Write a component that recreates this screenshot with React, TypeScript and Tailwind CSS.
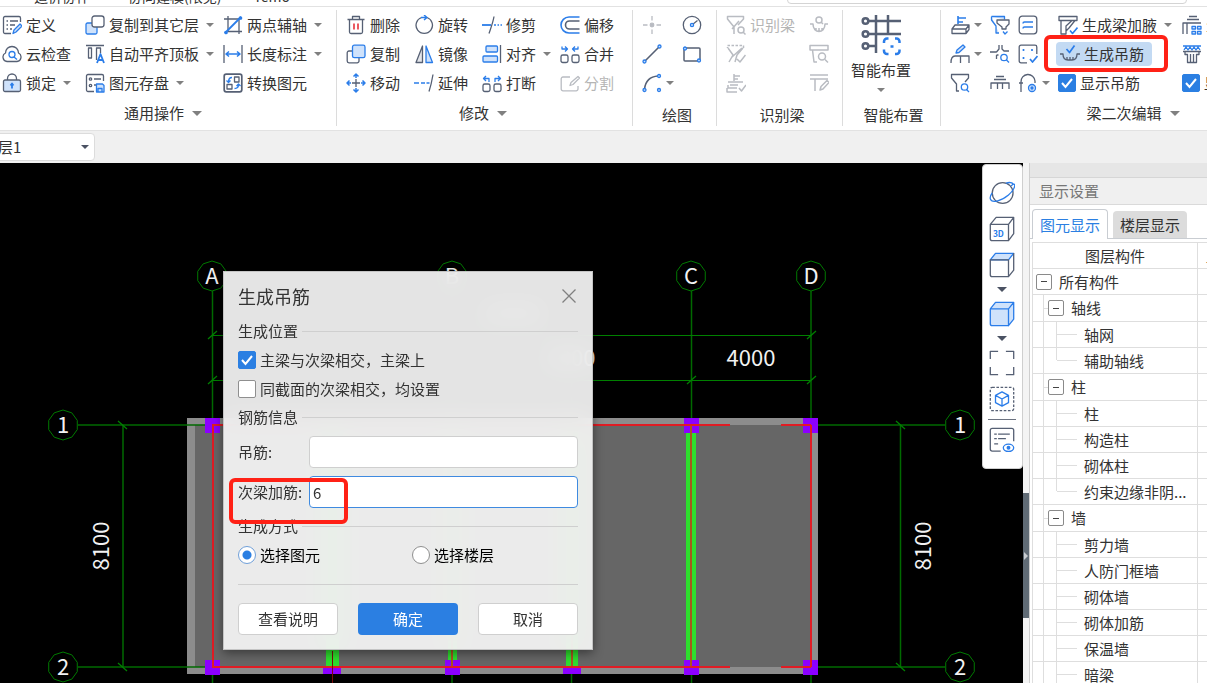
import type { ReactNode } from 'react'

const D = '#566074'
const B = '#2b7de9'
const L = '#cfe2fb'
const G = '#b9bcc2'

function Svg({ children, big }: { children: ReactNode; big?: boolean }) {
  return (
    <svg
      viewBox="0 0 20 20"
      className={big ? 'size-[26px] shrink-0' : 'size-5 shrink-0'}
      fill="none"
      stroke={D}
      strokeWidth={big ? 1 : 1.3}
      strokeLinejoin="round"
    >
      {children}
    </svg>
  )
}

const icons: Record<string, ReactNode> = {
  define: (
    <>
      <path d="M9 18.5H3A1.5 1.5 0 0 1 1.5 17V3A1.5 1.5 0 0 1 3 1.5H17A1.5 1.5 0 0 1 18.5 3V7M4.5 6h1.5M8 6h8M4.5 10h1.5M8 10h5M4.5 14h1.5M8 14h2" />
      <path d="M11 18.5l1-3.5 6-6 2 2-6 6z" stroke={B} fill={L} />
    </>
  ),
  cloud: (
    <>
      <path d="M5 17.5a4.5 4.5 0 0 1-1.5-8.5C3.5 5 6.5 2.5 10 2.5S16.5 5 16.5 9A4.5 4.5 0 0 1 15 17.5z" />
      <circle cx="10" cy="10.5" r="3" stroke={B} />
      <path d="M12 13l3 2.5" stroke={B} />
    </>
  ),
  lock: (
    <>
      <path d="M5.5 7V5.5a4.5 4.5 0 0 1 9 0V7" />
      <rect x="1.5" y="7" width="17" height="11.5" rx="1.5" fill={L} />
      <path d="M10 10.5V15.5M8.5 12.5L10 10.5l1.5 2" stroke={B} strokeWidth="1.8" />
    </>
  ),
  copyTo: (
    <>
      <rect x="1" y="8" width="11" height="11" rx="1.5" fill={L} stroke={B} />
      <rect x="7" y="1" width="12" height="11" rx="2.5" fill="#fff" />
    </>
  ),
  align: (
    <>
      <path d="M1 1.5h18M3.5 4h3v10h-3zM15.5 9V4h-4v12" />
      <path d="M12 19l3.5-9 3.5 9M13 16h5" stroke={B} strokeWidth="1.8" />
    </>
  ),
  store: (
    <>
      <path d="M9 18.5H3A1.5 1.5 0 0 1 1.5 17V3A1.5 1.5 0 0 1 3 1.5H17A1.5 1.5 0 0 1 18.5 3V8M9 6h7M9 12h3" />
      <circle cx="5.5" cy="6" r="1.2" />
      <circle cx="5.5" cy="12.5" r="1.2" />
      <path d="M11.5 11h6l1.5 1.5V19h-7.5zM13 19v-3.5h4V19" stroke={B} fill={L} />
    </>
  ),
  axis: (
    <>
      <path d="M5 1v16M16 3v16M1 4h15M5 16.5h14" />
      <path d="M2 18L18 2" stroke={B} strokeWidth="1.8" />
      <circle cx="3" cy="17.5" r="1.2" fill={B} stroke={B} />
      <circle cx="17.5" cy="3" r="1.2" fill={B} stroke={B} />
    </>
  ),
  length: (
    <>
      <path d="M1 1v18M19 1v18" />
      <path d="M3 10h14M6 7.5L3 10l3 2.5M14 7.5l3 2.5-3 2.5" stroke={B} strokeWidth="1.6" />
    </>
  ),
  convert: (
    <>
      <rect x="1.2" y="1.2" width="17.6" height="17.6" rx="2" strokeWidth="1.7" />
      <path d="M11.5 4h4.5v5h-4.5zM4 11.5h5V16H4z" />
      <path d="M9 4.5C6.5 4.5 5.5 6 5.5 9M3.5 7.5l2 2 2-2M11.5 15.5c3 0 4-1 4-4M13.5 13l2-2 2 2" stroke={B} />
    </>
  ),
  trash: (
    <>
      <path d="M1.5 4.5h17M6.5 4V1.5h7V4M3.5 4.5V17A1.5 1.5 0 0 0 5 18.5H15A1.5 1.5 0 0 0 16.5 17V4.5" />
      <path d="M8 8.5v6M12 8.5v6" stroke="#e5323c" strokeWidth="1.6" />
    </>
  ),
  copy: (
    <>
      <path d="M6 7H3A1.8 1.8 0 0 0 1.2 9V17A1.8 1.8 0 0 0 3 18.8H11A1.8 1.8 0 0 0 13 17V14" />
      <rect x="6.5" y="1.2" width="12.5" height="12.5" rx="1.8" fill={L} stroke={B} />
    </>
  ),
  move: (
    <>
      <path d="M10 6v8M6 10h8" />
      <path
        d="M10 1v4M10 15v4M1 10h4M15 10h4M7.5 3.5L10 1l2.5 2.5M7.5 16.5L10 19l2.5-2.5M3.5 7.5L1 10l2.5 2.5M16.5 7.5L19 10l-2.5 2.5"
        stroke={B}
        strokeWidth="1.5"
      />
    </>
  ),
  rotate: (
    <>
      <path d="M13 2.5A8.2 8.2 0 1 1 7.5 2.5" />
      <path d="M7 2.5h5M10 0l3 2.5L10 5" stroke={B} strokeWidth="1.5" />
    </>
  ),
  mirror: (
    <>
      <path d="M8.5 2v16.5H2z" fill="#e4e6ea" />
      <path d="M12 2v16.5h6.5z" stroke={B} fill={L} />
    </>
  ),
  extend: (
    <>
      <path d="M19 1.5c-1 6-2 11-4 17" />
      <path d="M0 10h5M7 10h4M12.5 10h3" stroke={B} strokeWidth="1.5" />
    </>
  ),
  trim: (
    <>
      <path d="M12 1.5c-1 6-3 11-5 17" />
      <path d="M0 10h9" stroke={B} strokeWidth="1.8" />
      <path d="M12 10h2M15.5 10h1.5M18.5 10h1.5" stroke={B} />
    </>
  ),
  alignTo: (
    <>
      <path d="M18.5 1v18" />
      <rect x="4" y="2" width="11.5" height="6" rx="1" fill={L} stroke={B} />
      <rect x="1" y="12" width="14.5" height="6" rx="1" fill={L} stroke={B} />
    </>
  ),
  breakUp: (
    <>
      <rect x="1" y="11" width="7" height="7.5" rx="1.8" />
      <rect x="12" y="11" width="7" height="7.5" rx="1.8" />
      <path d="M7 9V5.5H2M4 3L1.5 5.5 4 8M13 9V5.5h5M16 3l2.5 2.5L16 8" stroke={B} />
    </>
  ),
  offset: (
    <>
      <path d="M19.5 2H9a8 8 0 0 0 0 16H19.5" stroke={B} strokeWidth="1.6" />
      <path d="M19.5 6H9.5a4 4 0 0 0 0 8H19.5" strokeWidth="1.6" />
    </>
  ),
  merge: (
    <>
      <rect x="1" y="11" width="7" height="7.5" rx="1.8" />
      <rect x="12" y="11" width="7" height="7.5" rx="1.8" />
      <path d="M2 2.5V5h5M5 2.5L7.5 5 5 7.5M18 2.5V5h-5M15 2.5L12.5 5 15 7.5" stroke={B} />
    </>
  ),
  split: (
    <>
      <path d="M10 4H3A1.8 1.8 0 0 0 1.2 6V16A1.8 1.8 0 0 0 3 17.8H16A1.8 1.8 0 0 0 18 16V13" stroke={G} />
      <path d="M10 12.5l1-3 7-6 1.5 1.5-6.5 6.5z" stroke={G} />
    </>
  ),
  point: (
    <g stroke={G}>
      <path d="M10 1v4.5M10 14.5V19M1 10h4.5M14.5 10H19" />
      <circle cx="10" cy="10" r="1.8" fill={G} />
    </g>
  ),
  circle: (
    <>
      <circle cx="10" cy="10" r="8.7" />
      <path d="M10.5 9.5l5-4" />
      <circle cx="10" cy="10" r="1.6" fill={L} stroke={B} />
    </>
  ),
  line: (
    <>
      <path d="M3 17L17 3" strokeWidth="1.6" />
      <circle cx="2.5" cy="17.5" r="1.5" fill={L} stroke={B} />
      <circle cx="17.5" cy="2.5" r="1.5" fill={L} stroke={B} />
    </>
  ),
  rect: (
    <>
      <rect x="2" y="4" width="16" height="13" rx="1" strokeWidth="1.5" />
      <circle cx="3" cy="4.5" r="1.5" fill={L} stroke={B} />
      <circle cx="17" cy="16.5" r="1.5" fill={L} stroke={B} />
    </>
  ),
  arc: (
    <>
      <path d="M2.5 16C3.5 8 8 3.5 16 3" strokeWidth="1.6" />
      <circle cx="2.5" cy="17" r="1.5" fill={L} stroke={B} />
      <circle cx="17" cy="3" r="1.5" fill={L} stroke={B} />
      <circle cx="17" cy="17" r="1.5" fill={L} stroke={B} />
    </>
  ),
  filterFind: (
    <g stroke={G} strokeWidth="1.5">
      <path d="M8 19V12L1.5 4V1.5h16V4L12 10M6 14l7-8" />
      <circle cx="15" cy="15" r="3" />
      <path d="M17 17l2.5 2.5" />
    </g>
  ),
  filterDash: (
    <g stroke={G} strokeWidth="1.5">
      <path d="M17.5 4V1.5h-16V4" strokeDasharray="2.5 1.5" />
      <path d="M2 4l5 7L3 18M9 18l2-7 6-7M6 13L16 4M11 15l3 3 5.5-7" />
    </g>
  ),
  stackCheck: (
    <g stroke={G} strokeWidth="1.5">
      <path d="M8 1v7M8 3h6M8 6h4M2 9h15M4 12h8M2 12v3h9M1 15v4h10M13 15l2.5 3 4.5-6" />
    </g>
  ),
  anchorFind: (
    <g stroke={G} strokeWidth="1.5">
      <circle cx="10" cy="5" r="3" />
      <path d="M12 7l2 2M1 9h3c0 5 3 7.5 6 7.5s6-2.5 6-7.5h3M7 13v2.5M10 13v3M13 13v2.5" />
    </g>
  ),
  beamFind: (
    <g stroke={G} strokeWidth="1.5">
      <path d="M1 1.5h18V6H1zM3.5 6l1.5 12h3" />
      <circle cx="13" cy="12.5" r="3.5" />
      <path d="M16 15.5l3 3" />
    </g>
  ),
  beamEdit: (
    <g stroke={G} strokeWidth="1.5">
      <path d="M1 2h18M1 6h18M6 6v12M11 17l1-3.5 6-6 2 2-6 6.5z" />
    </g>
  ),
  flagBeam: (
    <>
      <path d="M8 9V1M8 3h8M8 7h5" stroke={B} strokeWidth="1.6" />
      <path d="M2 14l3-4h14l-3 4zM2 14v4.5h14V14M19 10v4.5l-3 4" />
    </>
  ),
  pencilBeam: (
    <>
      <path d="M6 9l1-3 6-5 2 2-6 5.5z" stroke={B} fill={L} />
      <path d="M1 19c0-4 1-7 4-7h14v7M10.5 12v7" />
    </>
  ),
  funnelFind: (
    <>
      <path d="M9 18H6.5V11L1.5 5V1.5h17V5L15 9" />
      <circle cx="14.5" cy="14" r="3.2" stroke={B} />
      <path d="M16.5 16.5L19 19" stroke={B} />
    </>
  ),
  funnels: (
    <>
      <path d="M1.5 1.5h13v3M1.5 1.5V5L6 11v7h3" stroke={B} fill={L} />
      <path d="M7 5h12v4l-3 3v2h-4v-2L7 8z" fill="#fff" />
      <path d="M13 16.5l2 2.5 2.5-2.5" stroke={B} />
    </>
  ),
  gridFind: (
    <>
      <path d="M0 8h6.5M9 1v4L6.5 8M12 1v4l2 2h5M6.5 11v4M6.5 11h2" />
      <circle cx="14" cy="13.5" r="3.2" stroke={B} />
      <path d="M16.5 16L19 18.5" stroke={B} />
    </>
  ),
  bars: <path d="M1 16v-6h18v6M4 6.5h12M6 3.5h8M7.5 10v6M12.5 10v6" />,
  sheet: (
    <>
      <rect x="1.2" y="1.2" width="17.6" height="17.6" rx="3" />
      <path d="M5 8.5c0-1 .5-1.500 1.500-1.500H15M5 13.500c0-1 .5-1.500 1.500-1.500H15" stroke={B} strokeWidth="1.5" />
    </>
  ),
  dots: (
    <>
      <path d="M9 18.8H3A1.8 1.8 0 0 1 1.2 17V3A1.8 1.8 0 0 1 3 1.2H17A1.8 1.8 0 0 1 18.8 3V10" />
      <path d="M5.5 5v2M14 5v2M5.5 13v2M12 15l2.5 3 5-6" stroke={B} strokeWidth="1.7" />
    </>
  ),
  hook: (
    <>
      <path d="M3 19V9a7 7 0 0 1 14-1v2M1 10h4" />
      <circle cx="14" cy="15" r="3.5" fill={L} stroke={B} />
      <circle cx="14" cy="15" r="1" fill={B} stroke={B} />
    </>
  ),
  haunch: (
    <>
      <path d="M1 1.5h18v4H1zM3 5.5V19h5V11l6-5.5M8 16l3-3 6-7.5" />
      <path d="M12 15.5l2.5 3 5-6" stroke={B} strokeWidth="1.6" />
    </>
  ),
  hanger: (
    <>
      <path d="M0 10h3c0 4 2 6 5 6h4c3 0 5-2 5-6h3M7 13v3M10 13v3M13 13v3" />
      <path d="M6.5 5l3 3.5 5-7" stroke={B} strokeWidth="1.7" />
    </>
  ),
  barsGrid: (
    <>
      <path d="M1 19V8h18M5 19V8M5 4.5h12M7 1.5h8" />
      <path d="M10 11.5h3.5v2.5H10zM15.5 11.5H19v2.5h-3.5zM10 16.5h3.5V19H10zM15.5 16.5H19V19h-3.5z" stroke={B} />
    </>
  ),
  comb: (
    <>
      <path d="M1 7.5h18M3 7.5v3h2.5v8h9v-8H17v-3M8.5 10v8M11.5 10v8" />
      <path d="M1 2h18M2 6l2-3 2 3 2-3 2 3 2-3 2 3 2-3 2 3" stroke={B} />
    </>
  ),
  // view toolbar
  orbit: (
    <>
      <circle cx="10.5" cy="10" r="8" />
      <path d="M17 4.5c4-4 4 2-2 7S2 18 1 14.5c-.3-1.5.3-3 1.5-4.5M13 2.5c2-.8 5.5-1 5.5 1" stroke={B} />
    </>
  ),
  cube3d: (
    <>
      <path d="M1 6.5h14V19H2.5A1.5 1.5 0 0 1 1 17.5zM1 6.5L5.5 1H19l-4 5.5M19 1v12.5L15 19" />
      <text x="3" y="16" fontSize="6.5" fontWeight="700" fill={B} stroke="none">3D</text>
    </>
  ),
  cubeTop: (
    <>
      <path d="M1 6L5 1h14l-4 5z" fill={L} stroke={B} />
      <path d="M1 6h14v13H2.5A1.5 1.5 0 0 1 1 17.5zM19 1v13l-4 5" />
    </>
  ),
  cubeFull: (
    <path d="M1 6h14v13H2.5A1.5 1.5 0 0 1 1 17.5zM1 6L5 1h14l-4 5M19 1v13l-4 5V6l4-5" fill={L} stroke={B} />
  ),
  frame: <path d="M7 1H1v6M13 1h6v6M7 19H1v-6M13 19h6v-6" />,
  isolate: (
    <>
      <rect x="1" y="1" width="18" height="18" rx="1.5" strokeDasharray="2 1.2" />
      <path d="M10 4.5l5 2.7v5.6l-5 2.7-5-2.7V7.2zM5 7.2l5 2.8 5-2.8M10 10v5.5" stroke={B} />
    </>
  ),
  listEye: (
    <>
      <path d="M9 18.5H2.5A1.5 1.5 0 0 1 1 17V2.5A1.5 1.5 0 0 1 2.5 1h15A1.5 1.5 0 0 1 19 2.5V11M4 5.5h2M7 5.5h9M4 9h2M7 9h6M4 13h3" />
      <ellipse cx="15" cy="16" rx="4" ry="2.8" fill="#fff" stroke={B} />
      <circle cx="15" cy="16" r="1" fill={B} stroke={B} />
    </>
  ),
}

function Icon({ name, big }: { name: string; big?: boolean }) {
  return <Svg big={big}>{icons[name]}</Svg>
}

function Caret({ dark, wide }: { dark?: boolean; wide?: boolean }) {
  return (
    <svg viewBox="0 0 8 4" className={wide ? 'h-[5px] w-2.5 shrink-0' : 'h-1 w-2 shrink-0'}>
      <path d="M0 0h8L4 4z" fill={dark ? '#4b5263' : '#808080'} />
    </svg>
  )
}

type ToolProps = { icon: string; label?: string; caret?: boolean; off?: boolean }

function Tool({ icon, label, caret, off }: ToolProps) {
  return (
    <button
      type="button"
      disabled={off}
      aria-label={label ?? icon}
      className={`flex h-[29px] items-center gap-1 whitespace-nowrap ${off ? 'text-[#b5b5b5]' : ''}`}
    >
      <Icon name={icon} />
      {label}
      {caret && <span className={label ? 'ml-[3px]' : ''}><Caret /></span>}
    </button>
  )
}

function Group({ title, caret, className, children }: { title: string; caret?: boolean; className: string; children: ReactNode }) {
  return (
    <section className={`mt-[3px] mb-1 flex shrink-0 flex-col border-r border-[#dcdcdc] ${className}`}>
      <div className="flex h-[87px] shrink-0">{children}</div>
      <div className={`flex shrink-0 items-center justify-center gap-2 whitespace-nowrap ${caret ? 'h-8 pr-3' : 'h-9 pr-1'}`}>
        {title}
        {caret && <Caret wide />}
      </div>
    </section>
  )
}

function Col({ className = '', children }: { className?: string; children: ReactNode }) {
  return <div className={`flex shrink-0 flex-col items-start ${className}`}>{children}</div>
}

function Tick({ label, checked = false }: { label: string; checked?: boolean }) {
  return (
    <label className="flex h-[29px] items-center gap-1 whitespace-nowrap">
      <span className="relative flex size-[18px] shrink-0">
        <input
          type="checkbox"
          defaultChecked={checked}
          className="peer size-[18px] appearance-none rounded-[2px] border border-[#8f8f8f] bg-white checked:border-[#2b7fe2] checked:bg-[#2b7fe2]"
        />
        <svg viewBox="0 0 18 18" className="pointer-events-none absolute inset-0 hidden peer-checked:block" fill="none">
          <path d="M4 9l3.5 4L14 5" stroke="#fff" strokeWidth="2" />
        </svg>
      </span>
      {label}
    </label>
  )
}

function TopTabs() {
  return (
    <nav className="flex h-[6px] shrink-0 items-end overflow-hidden bg-white text-sm leading-5">
      <a href="#cost" className="ml-[34px]">造价协作</a>
      <a href="#model" className="ml-[38px]">协同建模(限免)</a>
      <a href="#temo" className="ml-8">Temo</a>
      <input
        aria-label="搜索"
        placeholder="请输入 构件名称或功能命令进行搜索"
        className="mr-5 mb-0.5 ml-auto h-[22px] w-[400px] rounded border border-[#d4d4d4] px-1 text-xs placeholder:text-[#888]"
      />
    </nav>
  )
}

function Ribbon() {
  return (
    <div className="flex h-[125px] shrink-0 overflow-hidden border-y border-[#e2e2e2] bg-white">
      <Group title="通用操作" caret className="w-[337px] pl-0.5">
        <Col className="w-[83px]">
          <Tool icon="define" label="定义" />
          <Tool icon="cloud" label="云检查" />
          <Tool icon="lock" label="锁定" caret />
        </Col>
        <Col className="w-[138px]">
          <Tool icon="copyTo" label="复制到其它层" caret />
          <Tool icon="align" label="自动平齐顶板" caret />
          <Tool icon="store" label="图元存盘" caret />
        </Col>
        <Col>
          <Tool icon="axis" label="两点辅轴" caret />
          <Tool icon="length" label="长度标注" caret />
          <Tool icon="convert" label="转换图元" />
        </Col>
      </Group>
      <Group title="修改" caret className="w-[296px] pl-[9px]">
        <Col className="w-[68px]">
          <Tool icon="trash" label="删除" />
          <Tool icon="copy" label="复制" />
          <Tool icon="move" label="移动" />
        </Col>
        <Col className="w-[68px]">
          <Tool icon="rotate" label="旋转" />
          <Tool icon="mirror" label="镜像" />
          <Tool icon="extend" label="延伸" />
        </Col>
        <Col className="w-[78px]">
          <Tool icon="trim" label="修剪" />
          <Tool icon="alignTo" label="对齐" caret />
          <Tool icon="breakUp" label="打断" />
        </Col>
        <Col>
          <Tool icon="offset" label="偏移" />
          <Tool icon="merge" label="合并" />
          <Tool icon="split" label="分割" off />
        </Col>
      </Group>
      <Group title="绘图" className="w-[84px] pl-[9px]">
        <Col className="w-10">
          <Tool icon="point" off />
          <Tool icon="line" />
          <Tool icon="arc" caret />
        </Col>
        <Col>
          <Tool icon="circle" />
          <Tool icon="rect" />
        </Col>
      </Group>
      <Group title="识别梁" className="w-[126px] pl-[9px]">
        <Col className="w-[83px]">
          <Tool icon="filterFind" label="识别梁" off />
          <Tool icon="filterDash" off />
          <Tool icon="stackCheck" off />
        </Col>
        <Col>
          <Tool icon="anchorFind" off />
          <Tool icon="beamFind" off />
          <Tool icon="beamEdit" off />
        </Col>
      </Group>
      <Group title="智能布置" className="w-[98px] pl-2">
        <button type="button" className="flex flex-col items-center">
          <svg viewBox="0 0 40 42" className="mt-1 h-[42px] w-10" fill="none" stroke={D} strokeWidth="2.5">
            <path d="M6 7h34M6 20h34M6 32h9M15 1v38M27 1v18" />
            <circle cx="4.5" cy="7" r="2.8" fill="#fff" />
            <circle cx="4.5" cy="20" r="2.8" fill="#fff" />
            <circle cx="4.5" cy="32" r="2.8" fill="#fff" />
            <path
              d="M27.5 24.5H26a3 3 0 0 0-3 3V29M34 24.5h1.5a3 3 0 0 1 3 3V29M27.5 40H26a3 3 0 0 1-3-3V35.5M34 40h1.5a3 3 0 0 0 3-3V35.5M29.5 32.5h3"
              stroke={B}
            />
          </svg>
          <span className="mt-1 mb-2 leading-5">智能布置</span>
          <Caret />
        </button>
      </Group>
      <Group title="梁二次编辑" caret className="w-[388px] pl-[9px]">
        <Col className="w-10">
          <Tool icon="flagBeam" caret />
          <Tool icon="pencilBeam" caret />
          <Tool icon="funnelFind" />
        </Col>
        <Col className="w-7">
          <Tool icon="funnels" />
          <Tool icon="gridFind" />
          <Tool icon="bars" />
        </Col>
        <Col className="w-10">
          <Tool icon="sheet" />
          <Tool icon="dots" />
          <Tool icon="hook" caret />
        </Col>
        <Col className="w-[124px]">
          <Tool icon="haunch" label="生成梁加腋" caret />
          <div className="relative flex h-[29px] items-center">
            <button type="button" className="-ml-0.5 flex h-6 items-center gap-1 rounded bg-[#c3daf3] pr-2 pl-1 whitespace-nowrap">
              <Icon name="hanger" />
              生成吊筋
            </button>
            <span className="pointer-events-none absolute -inset-x-4 -inset-y-1 -left-3.5 rounded-md border-4 border-[#ff2116]" />
          </div>
          <Tick label="显示吊筋" checked />
        </Col>
        <Col>
          <Tool icon="barsGrid" label="生成架立筋" />
          <Tool icon="comb" />
          <Tick label="显示加密" checked />
        </Col>
      </Group>
    </div>
  )
}

function FloorBar() {
  return (
    <div className="flex h-8 shrink-0 items-center bg-[#f0f0f0]">
      <div className="relative -ml-6">
        <select aria-label="楼层" className="h-7 w-[119px] appearance-none rounded border border-[#dcdcdc] bg-white pl-[6px]">
          <option>首层1</option>
        </select>
        <span className="pointer-events-none absolute inset-y-0 right-[6px] flex items-center"><Caret dark /></span>
      </div>
    </div>
  )
}

function Bubble({ x, y, text }: { x: number; y: number; text: string }) {
  const pts = Array.from({ length: 10 }, (_, i) => {
    const a = (i * Math.PI) / 5 - Math.PI / 2
    return `${x + 15 * Math.cos(a)},${y + 15 * Math.sin(a)}`
  }).join(' ')
  return (
    <>
      <polygon points={pts} fill="none" stroke="#007a00" />
      <text x={x} y={y + 8} textAnchor="middle">{text}</text>
    </>
  )
}

const columns = [
  [205, 418], [684, 418], [803, 418], [205, 660], [445, 660], [684, 660], [803, 660],
]

function Plan() {
  return (
    <svg viewBox="0 163 1023 520" preserveAspectRatio="xMinYMin slice" className="h-full w-full" fontSize="22" fill="#f2f2f2">
      <path d="M187 418H818V674H187z" fill="#8c8c8c" />
      <path d="M195 425H811V667H195z" fill="#666" />
      <g stroke="#006a00" strokeWidth="1.5">
        <path d="M212.5 291V418M212.5 674V683M691.5 291V418M691.5 674V683M811 291V418M811 674V683M452 291V418M452 674V683M571.5 380V418M571.5 674V683" />
        <path d="M78 425H205M78 667H205M818 425H945M818 667H945M123 425V667M900.5 425V667" />
      </g>
      <path d="M212 335.5H811M212 380.5H811" stroke="#008000" />
      <path
        d="M208 339l9-8M208 384l9-8M687 384l9-8M807 339l9-8M807 384l9-8M118 421l9 8M118 663l9 8M896 421l9 8M896 663l9 8"
        stroke="#008000"
        strokeWidth="1.3"
      />
      <g fill="#2ede2e">
        <path d="M686 432H696V660H686zM326 432H339V667H326zM448 432H457V660H448zM566 432H578V667H566z" />
      </g>
      <g fill="#8c00ff">
        {columns.map(([x, y]) => <rect key={`${x}-${y}`} x={x} y={y} width="15" height="15" />)}
        <path d="M323 667H341V674H323zM563 667H581V674H563z" />
      </g>
      <g fill="#a8561e">
        <rect x="451" y="432" width="2" height="235" />
        <rect x="571" y="432" width="2" height="235" />
        <rect x="690" y="425" width="2" height="242" />
      </g>
      <g fill="#e01c24">
        <rect x="212" y="425" width="2" height="242" />
        <rect x="810" y="425" width="2" height="242" />
        <rect x="212" y="424" width="518" height="2" />
        <rect x="781" y="424" width="30" height="2" />
        <rect x="212" y="666" width="518" height="2" />
        <rect x="781" y="666" width="30" height="2" />
      </g>
      <path d="M332.5 651V683" stroke="#7c0a0a" />
      <Bubble x={212} y={276} text="A" />
      <Bubble x={452} y={276} text="B" />
      <Bubble x={691} y={276} text="C" />
      <Bubble x={811} y={276} text="D" />
      <Bubble x={63} y={425} text="1" />
      <Bubble x={63} y={667} text="2" />
      <Bubble x={960} y={425} text="1" />
      <Bubble x={960} y={667} text="2" />
      <text x="751" y="366" textAnchor="middle">4000</text>
      <text x="571" y="366" textAnchor="middle">8000</text>
      <text x="512" y="321" textAnchor="middle">20000</text>
      <text transform="translate(109 546) rotate(-90)" textAnchor="middle">8100</text>
      <text transform="translate(931 546) rotate(-90)" textAnchor="middle">8100</text>
    </svg>
  )
}

function Legend({ children }: { children: ReactNode }) {
  return (
    <h3 className="flex h-5 items-center gap-1 whitespace-nowrap">
      {children}
      <span className="h-px flex-1 bg-[#cfcfcf]" />
    </h3>
  )
}

function Choice({ label, checked }: { label: string; checked?: boolean }) {
  return (
    <label className="flex h-[30px] w-[174px] shrink-0 items-center gap-1 text-black">
      <input
        type="radio"
        name="mode"
        defaultChecked={checked}
        className="size-[18px] appearance-none rounded-full border border-[#8f8f8f] bg-white checked:border-[#6f9fd8] checked:bg-[radial-gradient(#2b7fe2_0_4px,#fff_5px)]"
      />
      {label}
    </label>
  )
}

function HangerDialog() {
  return (
    <form
      role="dialog"
      aria-label="生成吊筋"
      className="absolute top-[108px] left-[223px] w-[370px] border border-[#c4c4c4] bg-[#f5f5f5]/93 px-[14px] pb-[14px] shadow-[0_3px_10px_rgba(0,0,0,0.45)] backdrop-blur-md"
    >
      <div className="mb-0.5 flex h-[47px] items-center justify-between">
        <h2 className="text-lg">生成吊筋</h2>
        <button type="button" aria-label="关闭" className="p-0.5">
          <svg viewBox="0 0 14 14" className="size-[14px]" stroke="#808080" strokeWidth="1.3">
            <path d="M.5.5l13 13M13.5.5l-13 13" />
          </svg>
        </button>
      </div>
      <Legend>生成位置</Legend>
      <div className="my-1">
        <Tick label="主梁与次梁相交，主梁上" checked />
        <Tick label="同截面的次梁相交，均设置" />
      </div>
      <Legend>钢筋信息</Legend>
      <div className="mt-[9px] flex flex-col gap-2">
        <div className="flex items-center">
          <label htmlFor="bar" className="w-[71px]">吊筋:</label>
          <input id="bar" className="h-8 min-w-0 flex-1 rounded border border-[#cfcfcf] bg-white px-1" />
        </div>
        <div className="relative flex items-center">
          <label htmlFor="extra" className="w-[71px]">次梁加筋:</label>
          <input id="extra" defaultValue="6" className="h-8 min-w-0 flex-1 rounded border border-[#3f8ae0] bg-white px-[3px]" />
          <span className="pointer-events-none absolute top-0.5 -left-[9px] z-10 h-[46px] w-[119px] rounded-md border-4 border-[#ff2116]" />
        </div>
      </div>
      <div className="mt-2">
        <Legend>生成方式</Legend>
      </div>
      <div className="mt-1 flex">
        <Choice label="选择图元" checked />
        <Choice label="选择楼层" />
      </div>
      <div className="mt-3.5 flex justify-between border-t border-[#cfcfcf] pt-[18px]">
        <button type="button" className="h-8 w-[100px] rounded border border-[#cfcfcf] bg-white">查看说明</button>
        <button type="button" className="h-8 w-[100px] rounded bg-[#2b7fe2] text-white">确定</button>
        <button type="button" className="h-8 w-[100px] rounded border border-[#cfcfcf] bg-white">取消</button>
      </div>
    </form>
  )
}

function ViewButton({ name, caret }: { name: string; caret?: boolean }) {
  return (
    <button type="button" aria-label={name} className="flex flex-col items-center">
      <span className="flex h-9 items-center"><Icon name={name} big /></span>
      {caret && <span className="flex h-[13px] items-center"><Caret dark wide /></span>}
    </button>
  )
}

function ViewBar() {
  return (
    <div className="absolute top-px right-0 flex w-[41px] flex-col items-center rounded border border-[#cfcfcf] bg-white pt-2.5 pr-0.5 pb-2.5">
      <ViewButton name="orbit" />
      <ViewButton name="cube3d" />
      <ViewButton name="cubeTop" caret />
      <ViewButton name="cubeFull" caret />
      <ViewButton name="frame" />
      <ViewButton name="isolate" />
      <hr className="my-0.5 w-7 border-[#6b7280]" />
      <ViewButton name="listEye" />
    </div>
  )
}

const tree = [
  { text: '所有构件', depth: 0 },
  { text: '轴线', depth: 1 },
  { text: '轴网', depth: 2 },
  { text: '辅助轴线', depth: 2, last: true },
  { text: '柱', depth: 1 },
  { text: '柱', depth: 2 },
  { text: '构造柱', depth: 2 },
  { text: '砌体柱', depth: 2 },
  { text: '约束边缘非阴...', depth: 2, last: true },
  { text: '墙', depth: 1 },
  { text: '剪力墙', depth: 2 },
  { text: '人防门框墙', depth: 2 },
  { text: '砌体墙', depth: 2 },
  { text: '砌体加筋', depth: 2 },
  { text: '保温墙', depth: 2 },
  { text: '暗梁', depth: 2 },
]

function Toggle() {
  return (
    <button type="button" aria-label="折叠" className="flex size-4 shrink-0 items-center justify-center rounded-[2px] border border-[#8a8a8a] bg-white">
      <span className="h-px w-1.5 bg-[#444]" />
    </button>
  )
}

function TreeCell({ text, depth, last }: { text: string; depth: number; last?: boolean }) {
  if (depth === 0) {
    return <div className="flex h-[25px] items-center gap-[7px] pl-[3px]"><Toggle />{text}</div>
  }
  if (depth === 1) {
    return (
      <div className="flex h-[26px] items-center">
        <span className="h-full w-[11px] border-r border-[#dedede]" />
        <span className="h-px w-1 bg-[#dedede]" />
        <Toggle />
        <span className="ml-[7px]">{text}</span>
      </div>
    )
  }
  return (
    <div className="flex h-[25px] items-center whitespace-nowrap">
      <span className="h-full w-[11px] shrink-0 border-r border-[#dedede]" />
      <span className={`w-[13px] shrink-0 border-r border-[#dedede] ${last ? 'mb-[13px] h-3' : 'h-full'}`} />
      <span className="h-px w-5 shrink-0 bg-[#dedede]" />
      <span className="ml-[7px]">{text}</span>
    </div>
  )
}

function SidePanel() {
  return (
    <aside className="flex w-[178px] shrink-0 flex-col overflow-hidden border-l border-[#cfcfcf] bg-white">
      <div className="h-[15px] shrink-0 border-b border-[#d6d6d6] bg-[#e6e6e6]" />
      <h2 className="flex h-[27px] shrink-0 items-center border-b border-[#dadada] bg-[#f0f0f0] pl-[9px] text-[#777]">显示设置</h2>
      <div role="tablist" className="flex h-[34px] shrink-0 items-end gap-[5px] border-b border-[#c9cdd2] pl-0.5 whitespace-nowrap">
        <button role="tab" type="button" className="-mb-px h-[30px] rounded-t border border-b-0 border-[#c9cdd2] bg-white px-[7px] text-[#2b7fe2]">图元显示</button>
        <button role="tab" type="button" className="h-[27px] rounded-t bg-[#dcdcdc] px-[7px]">楼层显示</button>
      </div>
      <table className="mt-[3px] ml-0.5 w-[220px] shrink-0 table-fixed border-collapse border border-[#dedede]">
        <thead>
          <tr className="h-[26px]">
            <th className="w-[165px] border border-[#dedede] p-0 font-normal">图层构件</th>
            <th className="border border-[#dedede] p-0 pl-2 text-left font-normal">显示</th>
          </tr>
        </thead>
        <tbody>
          {tree.map((row, i) => (
            <tr key={i}>
              <td className="border border-[#dedede] p-0"><TreeCell {...row} /></td>
              <td className="border border-[#dedede] p-0" />
            </tr>
          ))}
        </tbody>
      </table>
    </aside>
  )
}

export default function App() {
  return (
    <div className="flex h-screen flex-col overflow-hidden bg-[#f0f0f0] font-['Noto_Sans_CJK_SC','Noto_Sans',sans-serif] text-[15px] leading-5 text-[#333]">
      <TopTabs />
      <Ribbon />
      <FloorBar />
      <main className="flex min-h-0 flex-1">
        <div className="relative min-w-0 flex-1 overflow-hidden bg-black">
          <Plan />
          <HangerDialog />
          <ViewBar />
        </div>
        <div className="flex w-[6px] shrink-0 flex-col bg-[#f4f4f4] pt-[330px]">
          <button type="button" aria-label="收起面板" className="flex h-[125px] w-full items-center justify-center bg-[#606b75]">
            <svg viewBox="0 0 4 8" className="h-2 w-1"><path d="M0 0l4 4-4 4z" fill="#c8ccd0" /></svg>
          </button>
        </div>
        <SidePanel />
      </main>
    </div>
  )
}
